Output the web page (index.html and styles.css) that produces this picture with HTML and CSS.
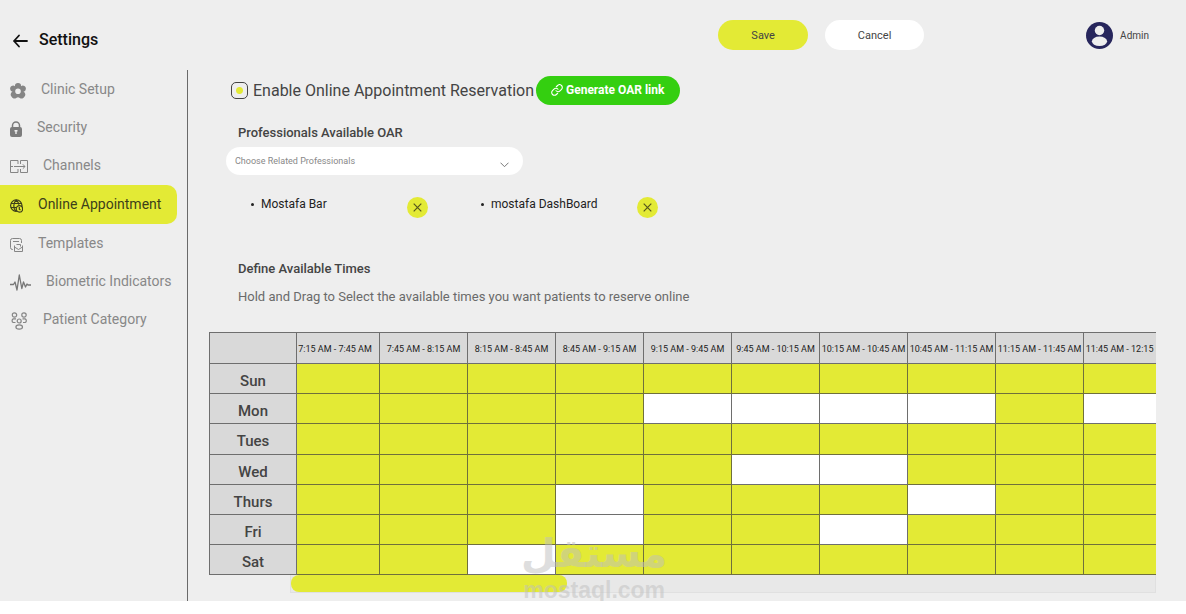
FILE: index.html
```html
<!DOCTYPE html>
<html lang="en">
<head>
    <meta charset="UTF-8">
    <meta name="viewport" content="width=device-width, initial-scale=1.0">
    <title>Settings - Online Appointment</title>
    <link rel="stylesheet" href="styles.css">
</head>
<body>
    <div class="page">
        <header class="topbar">
            <a href="#" class="back" aria-label="Back">
                <svg width="16" height="14" viewBox="0 0 16 14" fill="none" stroke="#111" stroke-width="1.800" stroke-linecap="round" stroke-linejoin="round"><path d="M15 7H2M7 1.500L2 7L7 12.500"/></svg>
            </a>
            <h1>Settings</h1>
            <div class="actions">
                <button type="button" class="btn btn-save">Save</button>
                <button type="button" class="btn btn-cancel">Cancel</button>
            </div>
            <div class="user">
                <svg width="27" height="27" viewBox="0 0 27 27"><circle cx="13.500" cy="13.500" r="13.500" fill="#27265c"/><circle cx="13.500" cy="8.500" r="4.700" fill="#eee"/><ellipse cx="13.500" cy="19.300" rx="7.600" ry="4.800" fill="#eee"/></svg>
                <span>Admin</span>
            </div>
        </header>

        <div class="layout">
            <nav class="sidebar">
                <a href="#">
                    <svg width="16" height="16" viewBox="0 0 16 16" fill="#858585"><path fill-rule="evenodd" d="M8 0a3 3 0 0 1 3 3.300a3 3 0 0 1 4.800 3a3 3 0 0 1-2.300 2.500a3 3 0 0 1 .9 4.900a3 3 0 0 1-4.600 1.200Q8 13.700 6.200 14.900a3 3 0 0 1-4.600-1.200a3 3 0 0 1 .9-4.900a3 3 0 0 1-2.300-2.500a3 3 0 0 1 4.800-3A3 3 0 0 1 8 0ZM8 5.500a2.800 2.800 0 1 0 0 5.600a2.800 2.800 0 1 0 0-5.600Z"/></svg>
                    Clinic Setup
                </a>
                <a href="#">
                    <svg width="12" height="16" viewBox="0 0 12 16"><path d="M2.500 7V4.500a3.500 3.500 0 0 1 7 0V7" fill="none" stroke="#7c7c7c" stroke-width="1.500"/><rect y="6" width="12" height="10" rx="2" fill="#7c7c7c"/><path d="M4.500 9h3v1.500H6.700V13H5.300v-2.500H4.500z" fill="#eee"/></svg>
                    Security
                </a>
                <a href="#">
                    <svg width="18" height="13" viewBox="0 0 18 13" fill="none" stroke="#858585"><path d="M8 4V.5H.5v12H8V9M10.500 4V.5h7v12h-7V9M4 6.500h11M12.800 4.300L15 6.500l-2.200 2.200M.5 6.500H3"/></svg>
                    Channels
                </a>
                <a href="#" class="active">
                    <svg width="13" height="14" viewBox="0 0 13 14" fill="none" stroke="#3d3f1a" stroke-width="1.200"><circle cx="6.300" cy="6.600" r="5.700"/><path d="M1 4.500h10.500M.8 8.500H6M6.300 1C3 4 3 9.500 6 12.300M6.300 1c1.600 1.500 2.400 3 2.500 4.800"/><circle cx="9.400" cy="9.900" r="3.200" fill="#e3ea35"/><path d="M9.300 8v2.200l1.200.8"/></svg>
                    Online Appointment
                </a>
                <a href="#">
                    <svg width="13" height="14" viewBox="0 0 13 14" fill="none" stroke="#858585"><path d="M3 11.500H2.500a2 2 0 0 1-2-2v-7a2 2 0 0 1 2-2h7a2 2 0 0 1 2 2V5M3 3.500h6M4.500 7.500v6h8v-6M4.500 9l4 2.500l4-2.500M6.500 6.500h4v2"/></svg>
                    Templates
                </a>
                <a href="#">
                    <svg width="21" height="18" viewBox="0 0 21 18" fill="none" stroke="#777" stroke-width="1.300" stroke-linejoin="round"><path d="M0 10.500h3.500L5 8l2 8L9.300 1l2.500 13.500L13.500 8l2 5l1.500-3l1 1H21"/></svg>
                    Biometric Indicators
                </a>
                <a href="#">
                    <svg width="18" height="18" viewBox="0 0 18 18" fill="none" stroke="#858585" stroke-width="1.200"><circle cx="4.500" cy="3" r="2.200"/><circle cx="14" cy="3" r="2.200"/><circle cx="9.200" cy="9" r="2"/><path d="M5.500 10.500H3.200a2 2 0 0 1 0-3.600H6M13 10.500h2.200a2 2 0 0 0 0-3.600h-2.700"/><ellipse cx="9.200" cy="15" rx="3.300" ry="2.200"/></svg>
                    Patient Category
                </a>
            </nav>

            <main class="content">
                <div class="enable-row">
                    <input type="checkbox" id="enableOar" checked>
                    <label for="enableOar">Enable Online Appointment Reservation</label>
                    <button type="button" class="btn-link">
                        <svg width="12" height="12" viewBox="0 0 24 24" fill="none" stroke="#fff" stroke-width="2.200" stroke-linecap="round"><path d="M10 13.500a5.500 5.500 0 0 0 8 .3l3-3a5.500 5.500 0 0 0-7.800-7.800l-2.500 2.500"/><path d="M14 10.500a5.500 5.500 0 0 0-8-.3l-3 3a5.500 5.500 0 0 0 7.800 7.800l2.500-2.500"/></svg>
                        Generate OAR link
                    </button>
                </div>

                <label for="professionals" class="field-title">Professionals Available OAR</label>
                <select id="professionals" class="professionals">
                    <option>Choose Related Professionals</option>
                </select>

                <ul class="chosen">
                    <li>
                        <span>Mostafa Bar</span>
                        <button type="button" aria-label="Remove Mostafa Bar"><svg width="9" height="9" viewBox="0 0 9 9" stroke="#55571c" stroke-width="1.200"><path d="M.7.7l7.600 7.600M8.300.7L.7 8.300"/></svg></button>
                    </li>
                    <li>
                        <span>mostafa DashBoard</span>
                        <button type="button" aria-label="Remove mostafa DashBoard"><svg width="9" height="9" viewBox="0 0 9 9" stroke="#55571c" stroke-width="1.200"><path d="M.7.7l7.600 7.600M8.300.7L.7 8.300"/></svg></button>
                    </li>
                </ul>

                <h2 class="field-title">Define Available Times</h2>
                <p class="hint">Hold and Drag to Select the available times you want patients to reserve online</p>

                <div class="schedule">
                    <div class="schedule-view">
                        <table>
                            <thead>
                                <tr id="timeRow"><th class="day"></th></tr>
                            </thead>
                            <tbody id="dayRows"></tbody>
                        </table>
                    </div>
                    <div class="scroll-track"><div class="scroll-thumb"></div></div>
                    <div class="watermark">
                        <span class="watermark-name" lang="ar" dir="rtl">مستقل</span>
                        <span>mostaql.com</span>
                    </div>
                </div>
            </main>
        </div>
    </div>

    <script>
        const times = ['7:15 AM', '7:45 AM', '8:15 AM', '8:45 AM', '9:15 AM', '9:45 AM', '10:15 AM', '10:45 AM', '11:15 AM', '11:45 AM', '12:15 PM'];

        // slots that are not open for reservation, by column index
        const closed = {
            Sun: [],
            Mon: [4, 5, 6, 7, 9],
            Tues: [],
            Wed: [5, 6],
            Thurs: [3, 7],
            Fri: [3, 6],
            Sat: [2]
        };

        const timeRow = document.getElementById('timeRow');
        for (let i = 0; i < times.length - 1; i++) {
            timeRow.innerHTML += `<th class="time${i === 0 ? ' first' : ''}">${times[i]} - ${times[i + 1]}</th>`;
        }

        let rows = '';
        for (const day in closed) {
            rows += `<tr><th class="day">${day}</th>`;
            for (let i = 0; i < times.length - 1; i++) {
                rows += `<td class="${closed[day].includes(i) ? '' : 'open'}"></td>`;
            }
            rows += '</tr>';
        }
        document.getElementById('dayRows').innerHTML = rows;
    </script>
</body>
</html>
```
FILE: styles.css
```css
* {
    box-sizing: border-box;
}

body {
    margin: 0;
    background-color: #fff;
    font-family: Roboto, "Liberation Sans", sans-serif;
    font-size: 14px;
    color: #444;
}

button,
select {
    font-family: inherit;
    border: none;
    cursor: pointer;
}

.page {
    background-color: #eee;
}

.topbar {
    display: flex;
    align-items: center;
    height: 70px;
    padding: 0 37px 0 12px;
}

.back {
    display: flex;
    margin-top: 12px;
}

.topbar h1 {
    margin: 8px 0 0 11px;
    font-size: 16px;
    font-weight: 500;
    color: #111;
}

.actions {
    display: flex;
    gap: 17px;
    margin-left: auto;
}

.btn {
    height: 30px;
    border-radius: 15px;
    font-size: 11px;
    color: #444;
}

.btn-save {
    width: 90px;
    background-color: #e3ea35;
}

.btn-cancel {
    width: 99px;
    background-color: #fff;
}

.user {
    display: flex;
    align-items: center;
    gap: 7px;
    margin-left: 162px;
    font-size: 10px;
}

.layout {
    display: flex;
}

.sidebar {
    width: 188px;
    flex-shrink: 0;
    border-right: 1px solid #6a6a6a;
}

.sidebar a {
    display: flex;
    align-items: center;
    gap: 15px;
    height: 38px;
    margin-right: 10px;
    padding-left: 10px;
    color: #888;
    text-decoration: none;
}

.sidebar svg {
    margin-top: 3px;
}

.sidebar a.active {
    height: 39px;
    margin-top: 1px;
    padding-bottom: 1px;
    background-color: #e3ea35;
    border-radius: 0 10px 10px 0;
    color: #3d3f1a;
}

.content {
    flex: 1;
    min-width: 0;
    padding: 6px 30px 8px 21px;
}

.enable-row {
    display: flex;
    align-items: center;
    height: 29px;
    padding-left: 22px;
}

.enable-row input {
    appearance: none;
    width: 17px;
    height: 17px;
    margin: 0 5px 0 0;
    border: 1px solid #444;
    border-radius: 5px;
}

.enable-row input:checked {
    background: radial-gradient(circle, #e3ea35 3px, transparent 4px);
}

.enable-row label {
    font-size: 16px;
}

.btn-link {
    display: flex;
    align-items: center;
    gap: 3px;
    height: 29px;
    margin-left: 2px;
    padding: 0 16px 2px 15px;
    border-radius: 15px;
    background-color: #34cf10;
    color: #fff;
    font-size: 12px;
    font-weight: 700;
}

.field-title {
    display: block;
    margin: 20px 0 0 29px;
    font-size: 13px;
    font-weight: 500;
    line-height: 16px;
}

.professionals {
    appearance: none;
    display: block;
    width: 297px;
    height: 28px;
    margin: 6px 0 0 17px;
    padding: 0 9px;
    border-radius: 14px;
    background: #fff url("data:image/svg+xml,%3Csvg xmlns='http://www.w3.org/2000/svg' width='9' height='6' fill='none' stroke='%23777'%3E%3Cpath d='M.5.7l4 4l4-4'/%3E%3C/svg%3E") no-repeat right 14px top 15px;
    color: #888;
    font-size: 9px;
}

.chosen {
    display: grid;
    grid-template-columns: repeat(2, 230px);
    margin: 21px 0 0 41px;
    padding: 0;
    list-style: none;
    font-size: 12px;
    color: #222;
}

.chosen li {
    display: flex;
    align-items: center;
    height: 23px;
}

.chosen li::before {
    content: "";
    width: 3px;
    height: 3px;
    margin: 0 7px 6px 1px;
    border-radius: 50%;
    background-color: #222;
}

.chosen span {
    width: 146px;
    padding-bottom: 8px;
}

.chosen button {
    display: flex;
    align-items: center;
    justify-content: center;
    width: 21px;
    height: 21px;
    padding: 0;
    border-radius: 50%;
    background-color: #e3ea35;
}

h2.field-title {
    margin-top: 42px;
}

.hint {
    margin: 12px 0 27px 29px;
    line-height: 16px;
    font-size: 13px;
    color: #6a6a6a;
}

.schedule {
    position: relative;
}

.schedule-view {
    overflow: hidden;
}

table {
    width: 963px;
    table-layout: fixed;
    border-collapse: collapse;
}

th,
td {
    height: 30px;
    padding: 0;
    border: 1px solid #6e6e6e;
    background-color: #fff;
}

thead th {
    height: 31px;
}

tbody tr:nth-child(3) > * {
    height: 31px;
}

.day {
    width: 87px;
    padding-top: 4px;
    background-color: #d9d9d9;
    font-size: 15px;
    font-weight: 500;
}

.time {
    width: 88px;
    padding-top: 2px;
    background-color: #d9d9d9;
    font-size: 9px;
    font-weight: 400;
    color: #222;
    white-space: nowrap;
}

.time.first {
    width: 83px;
    padding-right: 6px;
}

td.open {
    background-color: #e3ea35;
    border-color: #6f703c;
}

.scroll-track {
    height: 18px;
    margin-left: 81px;
    border: 1px solid #e0e0e0;
    border-top: none;
    background-color: #e8e8e8;
}

.scroll-thumb {
    width: 32%;
    height: 17px;
    border-radius: 8px;
    background-color: #e3ea35;
}

.watermark {
    position: absolute;
    left: 312px;
    bottom: -10px;
    display: flex;
    flex-direction: column;
    align-items: center;
    font-family: "Liberation Sans", sans-serif;
    font-size: 23px;
    font-weight: 700;
    line-height: 26px;
    color: rgba(190, 190, 190, 0.5);
    pointer-events: none;
}

.watermark-name {
    font-family: "DejaVu Sans", sans-serif;
    font-size: 40px;
    line-height: 48px;
}
```
